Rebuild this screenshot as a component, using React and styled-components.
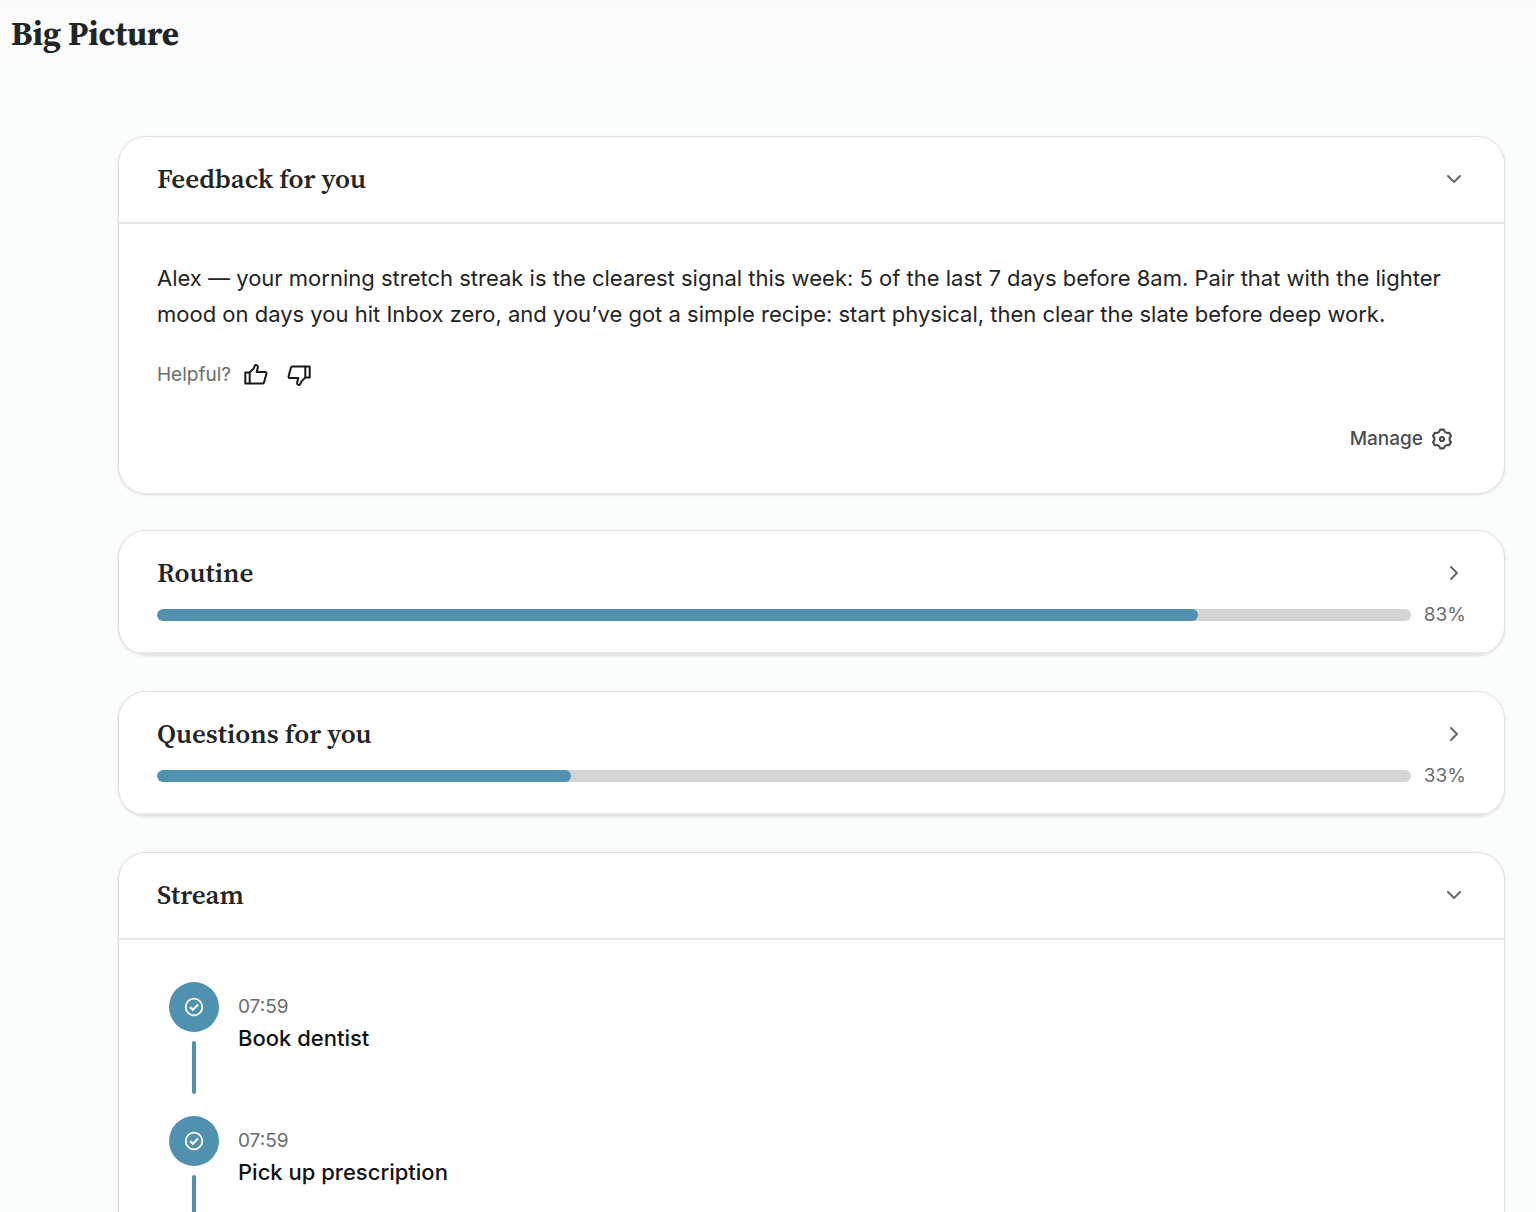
import React, { useState } from "react"
import styled, { createGlobalStyle } from "styled-components"
import { ChevronDown, ChevronRight } from "lucide-react"

const events = [
  { id: 1, time: "07:59", title: "Book dentist" },
  { id: 2, time: "07:59", title: "Pick up prescription" },
]

const ThumbIcon = () => (
  <svg
    width="24"
    height="24"
    viewBox="0 0 24 24"
    fill="none"
    stroke="currentColor"
    strokeWidth="2"
    strokeLinejoin="round"
    aria-hidden="true"
  >
    <path d="M1.3 9.4H5.7V20.6H1.3Z" />
    <path d="M5.7 9.4L9.6 5.6L10.8 2.9C11.2 2 11.9 1.8 12.6 2.2L13.1 2.5C13.8 2.9 14.1 3.5 13.9 4.2L12.7 9H21C22.1 9 22.6 9.7 22.4 10.7L20 19.5C19.8 20.2 19.3 20.6 18.6 20.6H5.7" />
  </svg>
)

const GearIcon = () => (
  <svg
    width="22"
    height="22"
    viewBox="-12 -12 24 24"
    fill="none"
    stroke="currentColor"
    strokeWidth="2.3"
    strokeLinejoin="round"
    aria-hidden="true"
  >
    <path d="M-2 -10.2L2 -10.2L3.1 -7.8L5.2 -6.6L7.8 -6.8L9.8 -3.4L8.3 -1.2V1.2L9.8 3.4L7.8 6.8L5.2 6.6L3.1 7.8L2 10.2H-2L-3.1 7.8L-5.2 6.6L-7.8 6.8L-9.8 3.4L-8.3 1.2V-1.2L-9.8 -3.4L-7.8 -6.8L-5.2 -6.6L-3.1 -7.8Z" />
    <circle r="2.2" />
  </svg>
)

const CheckIcon = () => (
  <svg
    width="20"
    height="20"
    viewBox="0 0 20 20"
    fill="none"
    stroke="currentColor"
    strokeWidth="1.8"
    aria-hidden="true"
  >
    <circle cx="10" cy="10" r="8.3" />
    <path d="M5.9 10L8.9 12.8L14.1 7.5" strokeWidth="2" />
  </svg>
)

const Section = ({ title, progress, defaultOpen = false, children }) => {
  const [open, setOpen] = useState(defaultOpen)

  return (
    <Card>
      <CardHeader>
        <CardHeading>
          <Toggle
            type="button"
            aria-expanded={open}
            onClick={() => setOpen(!open)}
          >
            {title}
            {open ? (
              <ChevronDown size={24} strokeWidth={2} />
            ) : (
              <ChevronRight size={24} strokeWidth={2} />
            )}
          </Toggle>
        </CardHeading>
        {progress !== undefined && (
          <ProgressRow>
            <Track
              role="progressbar"
              aria-label={title}
              aria-valuenow={progress}
              aria-valuemin={0}
              aria-valuemax={100}
            >
              <Fill style={{ width: `${progress}%` }} />
            </Track>
            <Percent>{progress}%</Percent>
          </ProgressRow>
        )}
      </CardHeader>
      {open && children && <CardBody>{children}</CardBody>}
    </Card>
  )
}

const App = () => {
  return (
    <Page>
      <GlobalStyle />
      <PageHeader>
        <PageTitle>Big Picture</PageTitle>
      </PageHeader>
      <Main>
        <Section title="Feedback for you" defaultOpen>
          <Message>
            Alex — your morning stretch streak is the clearest signal this week:
            5 of the last 7 days before 8am. Pair that with the lighter mood on
            days you hit Inbox zero, and you’ve got a simple recipe: start
            physical, then clear the slate before deep work.
          </Message>
          <HelpfulRow>
            <span>Helpful?</span>
            <ThumbButton type="button" aria-label="Helpful">
              <ThumbIcon />
            </ThumbButton>
            <ThumbButton type="button" aria-label="Not helpful" $down>
              <ThumbIcon />
            </ThumbButton>
          </HelpfulRow>
          <ManageRow>
            <ManageButton type="button">
              Manage
              <GearIcon />
            </ManageButton>
          </ManageRow>
        </Section>
        <Section title="Routine" progress={83} />
        <Section title="Questions for you" progress={33} />
        <Section title="Stream" defaultOpen>
          <Timeline>
            {events.map(event => (
              <Event key={event.id}>
                <Rail>
                  <Marker>
                    <CheckIcon />
                  </Marker>
                  <Connector />
                </Rail>
                <EventText>
                  <EventTime>{event.time}</EventTime>
                  <EventTitle>{event.title}</EventTitle>
                </EventText>
              </Event>
            ))}
          </Timeline>
        </Section>
      </Main>
    </Page>
  )
}

export default App

const GlobalStyle = createGlobalStyle`
  *,
  *::before,
  *::after {
    box-sizing: border-box;
  }
  body {
    margin: 0;
    background-color: #fbfdfc;
    color: #232424;
    font-family: Inter, "Liberation Sans", sans-serif;
    -webkit-font-smoothing: antialiased;
  }
  button {
    border: 0;
    padding: 0;
    background: none;
    color: inherit;
    font: inherit;
    cursor: pointer;
  }
`

const Page = styled.div`
  min-height: 100vh;
`

const PageHeader = styled.header`
  display: flex;
  align-items: center;
  height: 68px;
  padding: 0 11px;
  background: linear-gradient(#fbfbfb, #fbfdfc);
`

const PageTitle = styled.h1`
  margin: 0;
  font-family: "Source Serif 4", "Source Serif Pro", "Liberation Serif", serif;
  font-size: 33px;
  font-weight: 700;
  line-height: 40px;
`

const Main = styled.main`
  display: flex;
  flex-direction: column;
  gap: 36px;
  padding: 68px 31px 36px 118px;
  @media (max-width: 800px) {
    padding: 24px 16px;
  }
`

const Card = styled.section`
  border: 1px solid #dfe2e1;
  border-radius: 28px;
  background-color: #ffffff;
  box-shadow: 0 1px 3px #0000001f;
  overflow: hidden;
`

const CardHeader = styled.div`
  padding: 24px 38px 25px;
  border-bottom: 2px solid #e6e8e7;
`

const CardHeading = styled.h2`
  margin: 0;
  font-family: "Source Serif 4", "Source Serif Pro", "Liberation Serif", serif;
  font-size: 27px;
  font-weight: 600;
  line-height: 36px;
`

const Toggle = styled.button`
  display: flex;
  align-items: center;
  justify-content: space-between;
  width: 100%;
  text-align: left;
  svg {
    flex: none;
    color: #666969;
  }
`

const ProgressRow = styled.div`
  display: flex;
  align-items: center;
  gap: 13px;
  padding: 12px 0 0;
`

const Track = styled.div`
  flex: 1;
  height: 12px;
  border-radius: 6px;
  background-color: #d3d5d4;
  overflow: hidden;
`

const Fill = styled.div`
  height: 100%;
  border-radius: 6px;
  background-color: #4f91af;
`

const Percent = styled.span`
  color: #6b6d6d;
  font-size: 19px;
  line-height: 24px;
`

const CardBody = styled.div`
  padding: 36px 38px;
`

const Message = styled.p`
  margin: 0;
  font-size: 22px;
  line-height: 36px;
`

const HelpfulRow = styled.div`
  display: flex;
  align-items: center;
  gap: 13px;
  margin-top: 25px;
  color: #6b6d6d;
  font-size: 19px;
  line-height: 36px;
`

const ThumbButton = styled.button`
  display: flex;
  color: #171919;
  transform: ${({ $down }) => ($down ? "rotate(180deg)" : "none")};
  & + & {
    margin-left: 6px;
  }
`

const ManageRow = styled.div`
  display: flex;
  justify-content: flex-end;
  margin-top: 28px;
`

const ManageButton = styled.button`
  display: flex;
  align-items: center;
  gap: 8px;
  padding: 0 13px;
  color: #4b4d4d;
  font-size: 19px;
  font-weight: 500;
  line-height: 36px;
`

const Timeline = styled.ol`
  margin: 0;
  padding: 6px 12px;
  list-style: none;
`

const Event = styled.li`
  display: flex;
  gap: 19px;
  min-height: 134px;
`

const Rail = styled.div`
  display: flex;
  flex-direction: column;
  align-items: center;
  gap: 9px;
  padding-bottom: 22px;
`

const Marker = styled.div`
  display: flex;
  align-items: center;
  justify-content: center;
  width: 50px;
  height: 50px;
  border-radius: 50%;
  background-color: #4f91af;
  color: #ffffff;
`

const Connector = styled.div`
  flex: 1;
  width: 4px;
  border-radius: 2px;
  background-color: #4f91af;
`

const EventText = styled.div`
  padding-top: 12px;
`

const EventTime = styled.time`
  display: block;
  color: #6b6d6d;
  font-size: 19px;
  line-height: 26px;
`

const EventTitle = styled.div`
  color: #111313;
  font-size: 22px;
  font-weight: 500;
  line-height: 36px;
`
